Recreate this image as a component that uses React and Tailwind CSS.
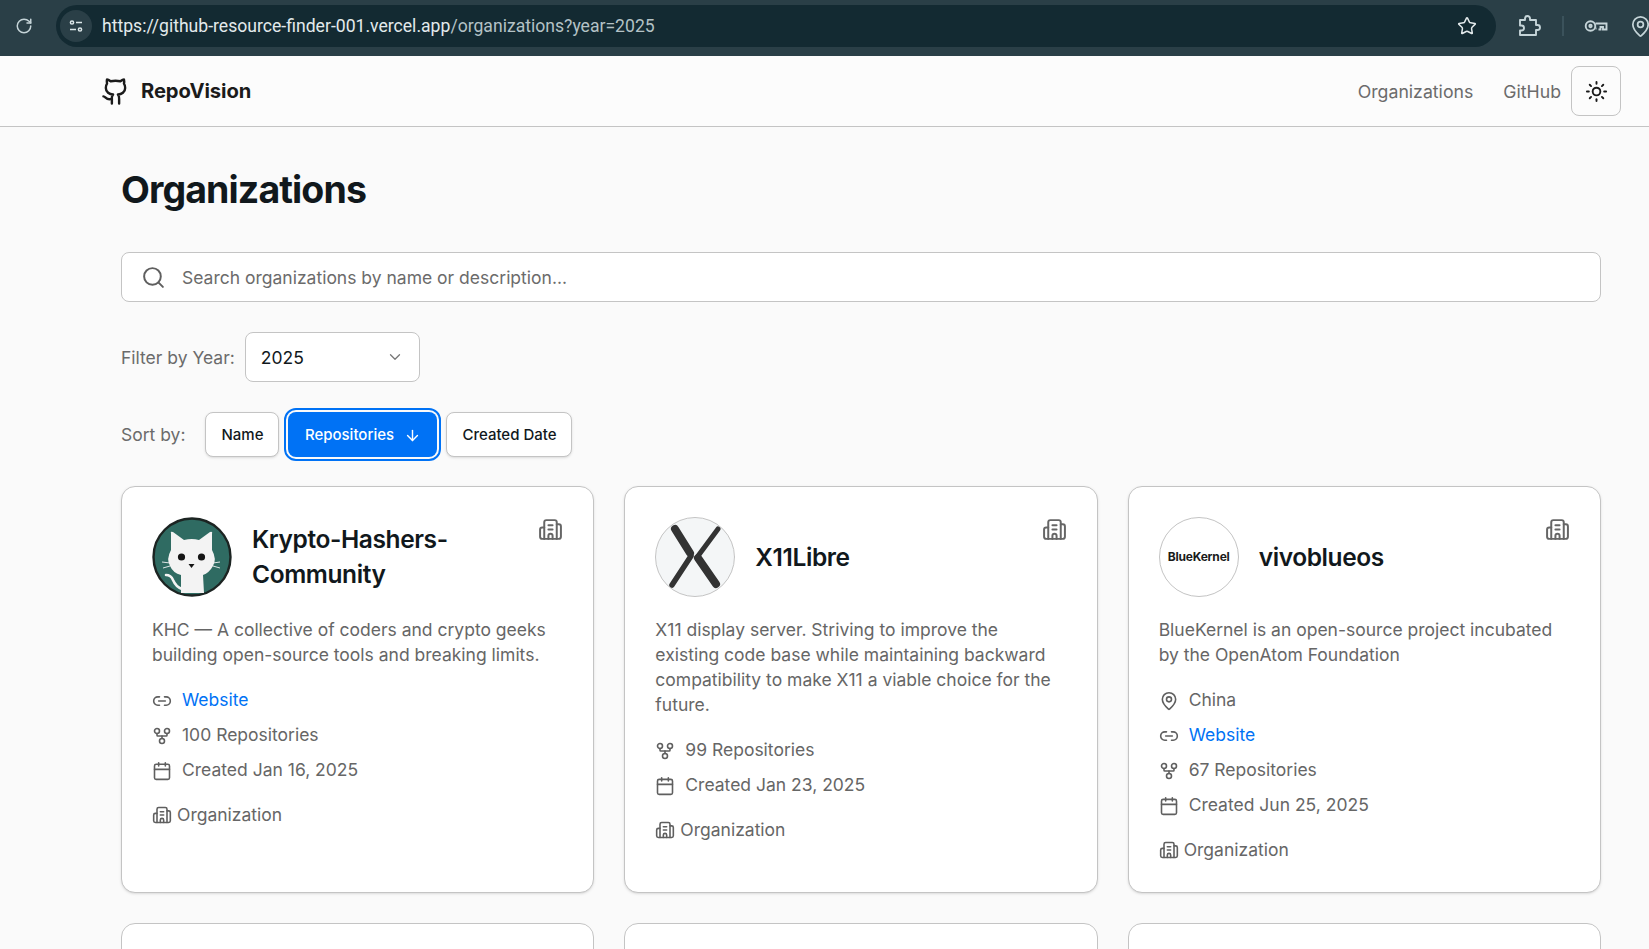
import React from 'react';
import {
  ArrowDown, Building2, Calendar, ChevronDown, GitFork, Github, Link2, MapPin, RotateCw, Search, Star, Sun,
} from 'lucide-react';

function CatAvatar() {
  return (
    <svg viewBox="0 0 80 80" className="w-[80px] h-[80px] shrink-0">
      <circle cx="40" cy="40" r="38.5" fill="#2f6b62" stroke="#1c2422" strokeWidth="2.4" />
      <path d="M19 16 Q18 14 21 15 L32 23 Q40 21 47 23 L58 15 Q61 14 60 17 L60 33 Q65 42 61 49 Q57 56 51 58 L52 76 L29 76 L29 58 Q21 56 18 49 Q14 42 19 33 Z" fill="#f3f3f3" />
      <path d="M30 72 Q24 70 21 63 Q19 58 14 58" fill="none" stroke="#f3f3f3" strokeWidth="2.6" strokeLinecap="round" />
      <circle cx="29.5" cy="40" r="3.6" fill="#151515" />
      <circle cx="49.5" cy="40" r="3.6" fill="#151515" />
      <path d="M36.5 47 L42.5 47 L39.5 51 Z" fill="#151515" />
      <path d="M18 46 L10 45 M18 49 L11 51 M61 46 L68 45 M61 49 L68 51" stroke="#f3f3f3" strokeWidth="0.9" />
    </svg>
  );
}

function XAvatar() {
  return (
    <svg viewBox="0 0 80 80" className="w-[80px] h-[80px] shrink-0" fill="none" stroke="#333333" strokeLinecap="round">
      <circle cx="40" cy="40" r="39.5" fill="#f4f6f7" stroke="#c4c4c4" strokeWidth="1" />
      <path d="M20 12 L35 36" strokeWidth="8" />
      <path d="M36 39 L17 68" strokeWidth="5.5" />
      <path d="M63 12 L43 39" strokeWidth="5" />
      <path d="M43 41 L61 67" strokeWidth="8" />
    </svg>
  );
}

function BlueKernelAvatar() {
  return (
    <div className="w-[80px] h-[80px] shrink-0 rounded-full border border-[#c4c4c4] bg-white flex items-center justify-center text-[12px] font-bold tracking-[-0.2px] text-[#1b1b1b]">
      BlueKernel
    </div>
  );
}

function InfoRow({ icon: Icon, children }) {
  return (
    <div className="flex items-center gap-[10px] h-[25px] text-[17.5px] text-[#666666]">
      <Icon size={20} strokeWidth={1.9} className="shrink-0 text-[#5f5f5f]" />
      <span>{children}</span>
    </div>
  );
}

function OrgCard({ avatar, name, description, location, website, repos, created }) {
  return (
    <div className="h-[407px] bg-white border border-[#c4c4c4] rounded-[14px] shadow-sm pt-[30px] px-[30px]">
      <div className="flex items-start gap-[20px]">
        {avatar}
        <h3 className="flex-1 h-[80px] flex items-center text-[24.5px] leading-[35px] font-semibold tracking-[-0.4px] text-[#11181c]">{name}</h3>
        <Building2 size={25} strokeWidth={1.9} className="shrink-0 text-[#666666]" />
      </div>
      <p className="mt-[20px] text-[17.5px] leading-[25px] text-[#666666]">{description}</p>
      <div className="mt-[21px] flex flex-col gap-[10px]">
        {location && <InfoRow icon={MapPin}>{location}</InfoRow>}
        {website && <InfoRow icon={Link2}><span className="text-[#0072f5]">Website</span></InfoRow>}
        <InfoRow icon={GitFork}>{repos} Repositories</InfoRow>
        <InfoRow icon={Calendar}>Created {created}</InfoRow>
      </div>
      <div className="mt-[19px] flex items-center gap-[5px] text-[17.5px] leading-[25px] text-[#666666]">
        <Building2 size={20} strokeWidth={1.9} className="shrink-0 text-[#5f5f5f]" />
        <span>Organization</span>
      </div>
    </div>
  );
}

const orgs = [
  {
    avatar: <CatAvatar />,
    name: 'Krypto-Hashers-Community',
    description: 'KHC — A collective of coders and crypto geeks building open-source tools and breaking limits.',
    website: true,
    repos: 100,
    created: 'Jan 16, 2025',
  },
  {
    avatar: <XAvatar />,
    name: 'X11Libre',
    description: 'X11 display server. Striving to improve the existing code base while maintaining backward compatibility to make X11 a viable choice for the future.',
    repos: 99,
    created: 'Jan 23, 2025',
  },
  {
    avatar: <BlueKernelAvatar />,
    name: 'vivoblueos',
    description: 'BlueKernel is an open-source project incubated by the OpenAtom Foundation',
    location: 'China',
    website: true,
    repos: 67,
    created: 'Jun 25, 2025',
  },
];

export default function App() {
  return (
    <div className="w-full h-[949px] overflow-hidden bg-[#fafafa] font-['Inter',sans-serif]">
      {/* Browser chrome */}
      <div className="h-[56px] bg-[#2a3f47] flex items-center pb-[4px] text-[#c5d4d8] overflow-hidden">
        <RotateCw size={18} strokeWidth={2} className="ml-[15px] shrink-0" />
        <div className="ml-[23px] w-[1440px] shrink-0 h-[42px] rounded-full bg-[#132a32] flex items-center pl-[4px] pr-[19px]">
          <div className="w-[32px] h-[32px] rounded-full bg-[#2a3f47] flex items-center justify-center shrink-0">
            <svg viewBox="0 0 16 16" className="w-[16px] h-[16px]" fill="none" stroke="#dbe6e8" strokeWidth="1.5">
              <circle cx="4" cy="4.5" r="1.6" />
              <path d="M8 4.5h6M2 11.5h6" />
              <circle cx="12" cy="11.5" r="1.6" />
            </svg>
          </div>
          <div className="ml-[10px] text-[17.6px] font-['Roboto',sans-serif] text-[#e3eaec]">
            https://github-resource-finder-001.vercel.app<span className="text-[#b4c2c6]">/organizations?year=2025</span>
          </div>
          <Star size={20} strokeWidth={1.8} className="ml-auto text-[#e3eaec]" />
        </div>
        <svg viewBox="0 0 24 24" className="ml-[21px] w-[24px] h-[24px] shrink-0" fill="none" stroke="#c5d4d8" strokeWidth="1.9" strokeLinejoin="round">
          <path d="M3 6h5V4.5a2.5 2.5 0 0 1 5 0V6h6v5h1.5a2.5 2.5 0 0 1 0 5H19v5H3v-4.5h1.5a2.5 2.5 0 0 0 0-5H3Z" />
        </svg>
        <div className="ml-[21px] w-[2px] h-[20px] shrink-0 bg-[#3b525b]" />
        <svg viewBox="0 0 24 14" className="ml-[20px] w-[24px] h-[14px] shrink-0" fill="none" stroke="#c5d4d8" strokeWidth="1.9">
          <circle cx="6.5" cy="7" r="4.8" />
          <circle cx="6.5" cy="7" r="1.2" />
          <path d="M11.5 4.5h11v6h-3.5v-2.5h-2.5v2.5h-2M11.5 9.5h1" />
        </svg>
        <MapPin size={23} strokeWidth={1.8} className="ml-[21px] shrink-0" />
      </div>

      {/* Navbar */}
      <header className="h-[71px] bg-[#fcfcfc] border-b border-[#c4c4c4] flex items-center pl-[101px] pr-[28px]">
        <Github size={29} strokeWidth={2} className="text-[#1b1b1b]" />
        <span className="ml-[11px] text-[20.2px] font-bold tracking-[-0.1px] text-[#1b1b1b]">RepoVision</span>
        <nav className="ml-auto flex items-center pt-[2px] text-[17.7px] text-[#6b6b6b]">
          <a>Organizations</a>
          <a className="ml-[30px]">GitHub</a>
        </nav>
        <button className="ml-[10px] w-[50px] h-[50px] rounded-[8px] border border-[#c4c4c4] flex items-center justify-center">
          <Sun size={23} strokeWidth={2} className="text-[#1b1b1b]" />
        </button>
      </header>

      {/* Content */}
      <main className="pl-[121px] pr-[48px]">
        <h1 className="mt-[38px] text-[37.5px] leading-[50px] font-bold tracking-[-0.9px] text-[#11181c]">Organizations</h1>

        <div className="mt-[37px] h-[50px] bg-white border border-[#c4c4c4] rounded-[8px] flex items-center pl-[19px]">
          <Search size={25} strokeWidth={1.9} className="text-[#5f5f5f]" />
          <span className="ml-[16px] pt-[2px] text-[17.5px] text-[#6b6b6b]">Search organizations by name or description...</span>
        </div>

        <div className="mt-[30px] flex items-center">
          <span className="pt-[2px] text-[17.5px] text-[#6b6b6b]">Filter by Year:</span>
          <div className="ml-[10px] w-[175px] h-[50px] bg-white border border-[#c4c4c4] rounded-[8px] flex items-center justify-between pl-[15px] pr-[15px]">
            <span className="pt-[2px] text-[17.5px] text-[#11181c]">2025</span>
            <ChevronDown size={18} strokeWidth={1.7} className="text-[#777777]" />
          </div>
        </div>

        <div className="mt-[30px] flex items-center">
          <span className="pt-[1px] text-[17.5px] text-[#6b6b6b]">Sort by:</span>
          <button className="ml-[20px] w-[74px] h-[45px] pt-[1px] bg-white border border-[#c4c4c4] rounded-[8px] shadow-sm text-[15px] font-medium text-[#11181c]">Name</button>
          <button className="ml-[9px] w-[149px] h-[45px] pt-[1px] bg-[#0072f5] rounded-[8px] outline-2 outline-offset-2 outline-[#0072f5] flex items-center justify-center gap-[10px] text-[15px] font-medium text-white">
            Repositories
            <ArrowDown size={17} strokeWidth={2} />
          </button>
          <button className="ml-[9px] w-[126px] h-[45px] pt-[1px] bg-white border border-[#c4c4c4] rounded-[8px] shadow-sm text-[15px] font-medium text-[#11181c]">Created Date</button>
        </div>

        <div className="mt-[29px] grid grid-cols-3 gap-[30px]">
          {orgs.map((org) => (
            <OrgCard key={org.name} {...org} />
          ))}
          <div className="h-[407px] bg-white border border-[#c4c4c4] rounded-[14px]" />
          <div className="h-[407px] bg-white border border-[#c4c4c4] rounded-[14px]" />
          <div className="h-[407px] bg-white border border-[#c4c4c4] rounded-[14px]" />
        </div>
      </main>
    </div>
  );
}
